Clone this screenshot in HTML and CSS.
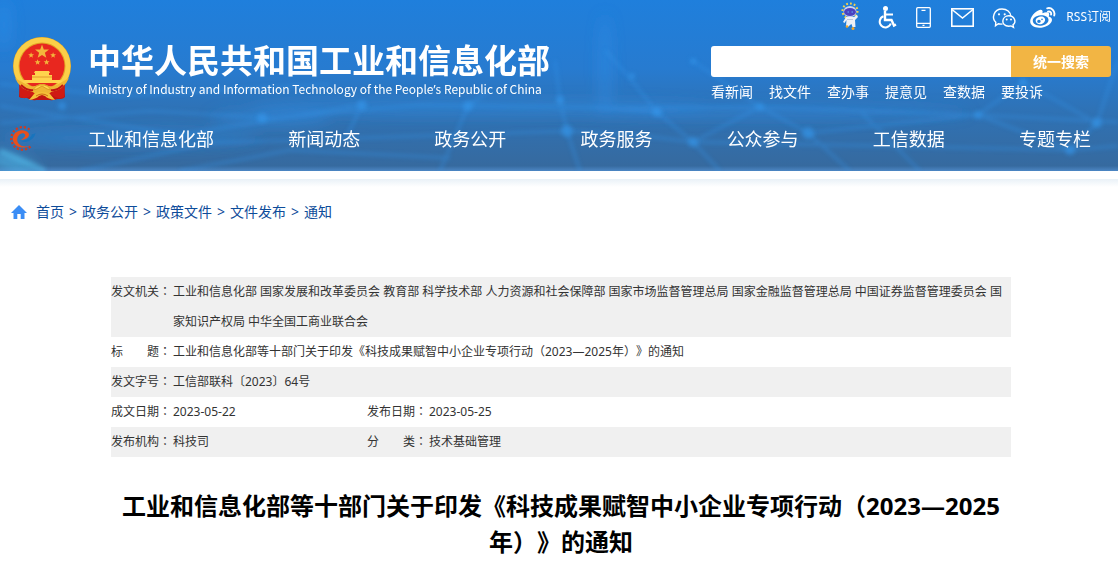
FILE: index.html
```html
<!DOCTYPE html>
<html lang="zh-CN">
<head>
<meta charset="utf-8">
<meta name="viewport" content="width=device-width, initial-scale=1">
<title>中华人民共和国工业和信息化部</title>
<link rel="stylesheet" href="styles.css">
</head>
<body>
<header class="header">
  <svg class="backdrop" viewBox="0 0 1118 171" preserveAspectRatio="none" aria-hidden="true">
    <defs>
      <filter id="soft" x="-10%" y="-10%" width="120%" height="120%"><feGaussianBlur stdDeviation="2"/></filter>
      <filter id="softer" x="-50%" y="-50%" width="200%" height="200%"><feGaussianBlur stdDeviation="7"/></filter>
    </defs>
    <g filter="url(#softer)" fill="#2f90ea">
      <ellipse cx="4" cy="25" rx="6" ry="25" opacity=".6"/>
      <ellipse cx="605" cy="65" rx="6" ry="50" opacity=".5"/>
      <ellipse cx="130" cy="138" rx="130" ry="9" opacity=".35"/>
      <ellipse cx="480" cy="108" rx="230" ry="8" opacity=".4"/>
      <ellipse cx="780" cy="112" rx="190" ry="6" opacity=".4"/>
      <ellipse cx="270" cy="118" rx="60" ry="8" opacity=".4"/>
      <ellipse cx="10" cy="163" rx="28" ry="5" fill="#52c4f6" opacity=".9" transform="rotate(16 10 163)"/>
    </g>
    <g filter="url(#soft)" fill="none" stroke="#3595ea" stroke-width="3" opacity=".38">
      <path d="M0 123 150 111 275 118 420 105 620 108 760 107 978 115 1118 122"/>
      <path d="M0 106 180 135 360 105"/>
      <path d="M80 171 210 143 567 131 628 134 693 142 1070 150 1118 146"/>
      <path d="M0 84 120 96 330 84"/>
      <path d="M180 171 290 150 450 158"/>
      <path d="M345 140 362 105 M440 171 468 106 490 90 M555 60 560 100 567 131 580 171"/>
      <path d="M600 108 657 112 693 142 720 171 M693 142 760 107 808 133 850 171"/>
      <path d="M605 50 628 76 657 112 M693 61 760 107 M862 113 920 171 M978 115 1023 82 1097 123 1070 150"/>
      <path d="M978 115 1070 150 M808 133 978 115 M1097 123 1118 60"/>
      <path d="M0 151 45 171" stroke="#5bd2ff" stroke-width="6"/>
    </g>
    <g filter="url(#soft)" fill="#369aef" opacity=".55">
      <circle cx="62" cy="106" r="4"/><circle cx="262" cy="118" r="5"/><circle cx="362" cy="105" r="5"/>
      <circle cx="468" cy="106" r="5"/><circle cx="567" cy="131" r="6"/><circle cx="560" cy="100" r="4"/>
      <circle cx="657" cy="112" r="5"/><circle cx="693" cy="142" r="5"/><circle cx="760" cy="107" r="4"/>
      <circle cx="808" cy="133" r="6"/><circle cx="978" cy="115" r="4"/><circle cx="1023" cy="82" r="4"/>
      <circle cx="1097" cy="123" r="5"/><circle cx="1070" cy="150" r="5"/><circle cx="693" cy="61" r="3"/>
      <circle cx="632" cy="76" r="3"/>
    </g>
  </svg>

  <div class="masthead">
    <a class="brand" href="#">
      <svg class="emblem" viewBox="0 0 60 64" aria-hidden="true">
        <path d="M8 44 7 60c3 2 6 0 8 1s6 3 9 2h14c3 1 5-1 8-1s5 0 7-2l-1-16z" fill="#c01512"/>
        <path d="M9 46c3 5 6 9 12 11M51 46c-3 5-6 9-12 11M12 59v-7M48 59v-7" stroke="#ee2a1c" stroke-width="2" fill="none"/>
        <circle cx="30" cy="29" r="29" fill="#e2a425"/>
        <circle cx="30" cy="29" r="26" fill="none" stroke="#fbcf48" stroke-width="5"/>
        <circle cx="30" cy="29" r="22.500" fill="#e8271f"/>
        <g fill="#f3b63c">
          <path id="star" d="M30 7.500 31.800 12.400 37 12.600 32.900 15.800 34.300 20.800 30 17.900 25.700 20.800 27.100 15.800 23 12.600 28.200 12.400z"/>
          <use href="#star" transform="translate(6.500 12) scale(.42)"/>
          <use href="#star" transform="translate(28.500 12) scale(.42)"/>
          <use href="#star" transform="translate(13 19) scale(.42)"/>
          <use href="#star" transform="translate(22 19) scale(.42)"/>
        </g>
        <path d="M23 34h14l1 2h-1v2h3v5h7c2 0 4 2 3 3H10c0-2 1-3 3-3h7v-5h3v-2h-1z" fill="#ffd34d"/>
        <path d="M20 40h20" stroke="#e39a2d" stroke-width="1"/>
        <path d="M7 46q11 6 18 2h10q7 4 18-2l-1 14q-6 3-12-2H20q-6 5-12 2z" fill="#cf1a14"/>
        <path d="M3 41q5 12 18 14l3 3h12l3-3q13-2 18-14l-7 4q-7 5-13 4l-5-2h-4l-5 2q-6 1-13-4z" fill="#efb533"/>
        <path d="M9 48q6 6 12 5M51 48q-6 6-12 5" stroke="#c01512" stroke-width="2" fill="none"/>
        <path d="M21 53c3-7 15-7 18 0l-4-1-5-3-5 3z" fill="#ffd34d" stroke="#dd9c22" stroke-width="1"/>
        <path d="M17 63l5-6q8-4 16 0l5 6q-7-1-10-4l-3-1-3 1q-3 3-10 4z" fill="#f5c137"/>
        <path d="M24 59q6-4 12 0" stroke="#cf6d18" fill="none"/>
      </svg>
      <span class="brand-text">
        <span class="brand-cn">中华人民共和国工业和信息化部</span>
        <span class="brand-en" lang="en">Ministry of Industry and Information Technology of the People<span class="apostrophe">’</span>s Republic of China</span>
      </span>
    </a>

    <div class="side">
      <div class="tools">
        <a href="#" aria-label="智能问答"><svg width="26" height="30" viewBox="0 0 26 30">
          <circle cx="13" cy="9" r="7.500" fill="none" stroke="#f6d04a" stroke-width="2" stroke-dasharray="1.800 2.100"/>
          <ellipse cx="13" cy="9.500" rx="6.500" ry="5.500" fill="#cdd6f0"/>
          <ellipse cx="13" cy="10" rx="6" ry="4" fill="#4a42c0"/>
          <path d="M10.500 10h1.500M14.500 10h1.500" stroke="#5fb4ff"/>
          <path d="M9 15h8l3-2 1 2-3 3 .5 7h-3l-1-3-1.500 1-2 2-2-1 .5-6-2 3-1.500-1z" fill="#edf0f6"/>
          <path d="M10 17.500h6" stroke="#bac6dc"/>
          <circle cx="10" cy="24.500" r="1.300" fill="#f5a623"/><circle cx="16" cy="26.500" r="1.500" fill="#f5a623"/>
        </svg></a>
        <a href="#" aria-label="无障碍"><svg width="28" height="30" viewBox="0 0 28 30" fill="none" stroke="#fff" stroke-width="2">
          <circle cx="12.500" cy="6.500" r="2.500" fill="#fff" stroke="none"/>
          <path d="M12 9v9h6.500l2.500 5.500 2-1" stroke-width="2.400"/><path d="M13 12.500h7"/>
          <path d="M10.500 14.300a5.700 5.700 0 1 0 7.300 7.200"/>
        </svg></a>
        <a href="#" aria-label="手机版"><svg width="25" height="30" viewBox="0 0 25 30" fill="none" stroke="#fff" stroke-width="1.300">
          <rect x="5.700" y="5.700" width="13.600" height="19.600" rx="1"/><path d="M6 21.300h13M10.500 8.300h4M11.500 23.400h2"/>
        </svg></a>
        <a href="#" aria-label="邮箱"><svg width="32" height="30" viewBox="0 0 32 30" fill="none" stroke="#fff" stroke-width="1.600">
          <rect x="5.800" y="6.800" width="21.400" height="17.400"/><path d="m6 7.500 10.500 8.500 10.500-8.500"/>
        </svg></a>
        <a href="#" aria-label="微信"><svg width="32" height="30" viewBox="0 0 32 30" fill="none" stroke="#fff" stroke-width="1.400">
          <path d="M14.500 22q-2 .3-4.200-.3L7.500 23.800l.3-3.500C3.600 16.500 5.300 7 14 7c5 0 8.500 3.200 8.700 7"/>
          <path d="M20.800 13.800c-7.300 0-8.600 10.200 0 10.500l2.200-.4 2.500 1.400-.5-2.400c3.800-3 1.500-9.100-4.200-9.100z"/>
          <g fill="#fff" stroke="none"><circle cx="11" cy="12.300" r="1.100"/><circle cx="16.700" cy="12.300" r="1.100"/><circle cx="18.700" cy="17.500" r="1"/><circle cx="23" cy="17.500" r="1"/></g>
        </svg></a>
        <a href="#" aria-label="微博"><svg width="26" height="30" viewBox="0 0 26 30">
          <path fill="#fff" fill-rule="evenodd" d="M9.500 8c2.600-.8 3.700.7 2.900 3.300 3.200-1.300 7-1.600 6.800 1.200 0 1-.5 1.500-.4 1.900 5.400 1.800 3.300 6.600-1 9C10 27.800 0 25.500.2 19.300.3 15 5 9.500 9.500 8zM10.500 13.200c-4.600.3-8 2.900-7.700 5.900s4 5 8.200 4.600 7.700-3 7.500-6-3.700-4.700-8-4.500z"/>
          <path fill="#fff" fill-rule="evenodd" d="M10.500 14.600c-3.300.4-5.300 2.700-4.700 5 .7 2.400 3.400 3.300 6 2.400s4-3.400 3-5.400-2.700-2.200-4.300-2zM9 17.700a1.800 1.600 0 1 1-.1 3.200 1.800 1.600 0 0 1 .1-3.200zM12 16.600a.8.800 0 1 1 0 1.600.8.800 0 0 1 0-1.600z"/>
          <path fill="none" stroke="#fff" stroke-width="1.900" stroke-linecap="round" d="M17.200 6.300c4.300-1.100 8.300 2.700 7 7.200M18 9.600c2.200-.5 3.600 1 3.100 3"/>
        </svg></a>
        <a class="rss" href="#">RSS订阅</a>
      </div>
      <form class="search">
        <input class="search-input" type="text" aria-label="搜索">
        <button class="search-button" type="button">统一搜索</button>
      </form>
      <div class="shortcuts">
        <a href="#">看新闻</a><a href="#">找文件</a><a href="#">查办事</a><a href="#">提意见</a><a href="#">查数据</a><a href="#">要投诉</a>
      </div>
    </div>
  </div>

  <nav class="nav" aria-label="主导航">
    <a class="nav-logo" href="#" aria-label="首页"><svg width="28" height="26" viewBox="0 0 28 26">
      <path d="M21.500 3.500A11.300 11.300 0 1 0 22.500 20.500" fill="none" stroke="#d8381a" stroke-width="2.200" stroke-dasharray="2.100 2"/>
      <path d="M22 19.500C12 25 3.500 18.500 5 11 7 3.500 17 2.500 20.500 7c2 3.500-2 6.500-8 7 3-1.500 5.500-4 4.500-5.500-1.500-2.500-6-1-7.500 3-1.700 6 4 11 12.500 8z" fill="#e8501c"/>
      <path d="M12 14.800C18 18 26 14 27.500 7c-1 1-2 1.500-3.500 1-1 4-6 7-12 6.800z" fill="#1874bd"/>
    </svg></a>
    <div class="nav-list">
      <a href="#">工业和信息化部</a><a href="#">新闻动态</a><a href="#">政务公开</a><a href="#">政务服务</a><a href="#">公众参与</a><a href="#">工信数据</a><a href="#">专题专栏</a>
    </div>
  </nav>
</header>

<main class="main">
  <nav class="crumbs" aria-label="当前位置">
    <svg width="16" height="14" viewBox="0 0 16 14" fill="#3b8df5" aria-hidden="true"><path d="M8 0 0 8h2.500v6h3.800V9h3.400v5h3.800V8H16z"/></svg>
    <a class="home" href="#">首页</a><span>&gt;</span><a href="#">政务公开</a><span>&gt;</span><a href="#">政策文件</a><span>&gt;</span><a href="#">文件发布</a><span>&gt;</span><a href="#">通知</a>
  </nav>

  <article class="article">
    <table class="info">
      <colgroup><col class="col-label"><col class="col-value"><col class="col-label"><col></colgroup>
      <tbody>
        <tr><th scope="row">发文机关<span class="colon" lang="ja">：</span></th><td class="wide" colspan="3">工业和信息化部 国家发展和改革委员会 教育部 科学技术部 人力资源和社会保障部 国家市场监督管理总局 国家金融监督管理总局 中国证券监督管理委员会 国家知识产权局 中华全国工商业联合会</td></tr>
        <tr><th scope="row">标　　题<span class="colon" lang="ja">：</span></th><td colspan="3">工业和信息化部等十部门关于印发《科技成果赋智中小企业专项行动（2023—2025年）》的通知</td></tr>
        <tr><th scope="row">发文字号<span class="colon" lang="ja">：</span></th><td colspan="3">工信部联科〔2023〕64号</td></tr>
        <tr><th scope="row">成文日期<span class="colon" lang="ja">：</span></th><td>2023-05-22</td><th scope="row">发布日期<span class="colon" lang="ja">：</span></th><td>2023-05-25</td></tr>
        <tr><th scope="row">发布机构<span class="colon" lang="ja">：</span></th><td>科技司</td><th scope="row">分　　类<span class="colon" lang="ja">：</span></th><td>技术基础管理</td></tr>
      </tbody>
    </table>
    <h1 class="title">工业和信息化部等十部门关于印发《科技成果赋智中小企业专项行动（2023—2025年）》的通知</h1>
  </article>
</main>
</body>
</html>
```
FILE: styles.css
```css
* { box-sizing: border-box; }

body {
  margin: 0;
  background: #fff;
  color: #333;
  font: 14px/20px "Noto Sans", "Noto Sans CJK SC", sans-serif;
  text-spacing-trim: space-all;
}

a { color: inherit; text-decoration: none; }
svg { display: block; }

.header {
  position: relative;
  background: linear-gradient(#1f7fdc, #277bd0 40%, #2f72b5 65%, #366a9f 97%, #4c86c4);
  color: #fff;
}

.backdrop {
  position: absolute;
  inset: 0;
  width: 100%;
  height: 100%;
}

.masthead {
  position: relative;
  display: flex;
  justify-content: space-between;
  padding: 0 7px 0 12px;
}

.brand {
  display: flex;
  gap: 16px;
  padding-top: 37px;
}

.emblem { width: 60px; height: 64px; }

.brand-text {
  display: flex;
  flex-direction: column;
  padding-top: 2px;
  font-family: "Noto Sans CJK SC", sans-serif;
  white-space: nowrap;
}

.brand-cn { font-size: 33px; font-weight: 700; line-height: 40px; }
.brand-en { font-size: 12px; line-height: 20px; }
.apostrophe { font-family: "Noto Sans", sans-serif; line-height: 1; }

.side { width: 400px; }

.tools {
  display: flex;
  justify-content: flex-end;
  align-items: center;
  gap: 10px;
  height: 34px;
}

.rss { font-size: 12px; white-space: nowrap; }

.search {
  display: flex;
  height: 31px;
  margin-top: 12px;
}

.search-input {
  flex: 1;
  min-width: 0;
  padding: 0 10px;
  border: 0;
  border-radius: 3px 0 0 3px;
  background: #fff;
  font: inherit;
}

.search-button {
  width: 100px;
  padding: 0;
  border: 0;
  border-radius: 0 3px 3px 0;
  background: #f2b544;
  color: #fff;
  font: inherit;
  font-weight: 700;
}

.shortcuts {
  display: flex;
  gap: 16px;
  line-height: 30px;
}

.nav {
  position: relative;
  display: flex;
  align-items: center;
  height: 64px;
  padding: 0 27px 0 8px;
}

.nav-list {
  flex: 1;
  display: flex;
  justify-content: space-between;
  padding-left: 52px;
  font-size: 18px;
}

.main {
  margin-top: 8px;
  padding: 0 7px 0 11px;
  background: linear-gradient(#e9f1f7, #fff 8px);
}

.crumbs {
  display: flex;
  align-items: center;
  gap: 5px;
  padding: 23px 0;
  color: #0e4c9a;
}

.home { padding-left: 4px; }

.article {
  max-width: 900px;
  margin: 32px auto 0;
}

.info {
  width: 100%;
  border-collapse: collapse;
  table-layout: fixed;
  font-size: 12px;
  line-height: 30px;
}

.col-label { width: 62px; }
.col-value { width: 194px; }

.info th,
.info td {
  padding: 0;
  font-weight: 400;
  text-align: left;
  vertical-align: top;
}

.info th { white-space: nowrap; }
.info .wide { padding-right: 4px; }
.info tr:nth-child(odd) { background: #f0f0f0; }
.colon { font-family: "Noto Sans CJK JP", sans-serif; line-height: 1; }

.title {
  margin: 31px 0 0;
  color: #000;
  font-size: 24px;
  font-weight: 700;
  line-height: 36px;
  text-align: center;
}
```
